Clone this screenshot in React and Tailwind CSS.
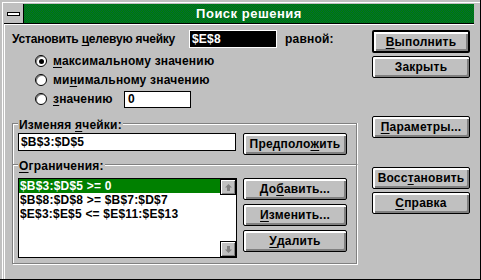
import React from "react";

const font = { fontFamily: '"Liberation Sans", Arial, sans-serif' };

const Btn = ({ children, w = "w-[98px]", def = false, className = "" }) => (
  <div
    className={`${w} ${def ? "h-[23px] border-2" : "h-[22px] border"} border-black rounded-[2px] bg-[#c0c0c0] shadow-[inset_2px_2px_0_#fff,inset_-2px_-2px_0_#808080] flex items-center justify-center text-[12px] font-bold text-black ${className}`}
  >
    {children}
  </div>
);

const U = ({ children }) => <span className="underline underline-offset-2">{children}</span>;

const Radio = ({ checked }) => (
  <div className="w-[12px] h-[12px] rounded-full bg-white border border-black shadow-[inset_1px_1px_0_#808080] flex items-center justify-center">
    {checked && <div className="w-[5px] h-[5px] rounded-full bg-black" />}
  </div>
);

const Arrow = ({ up }) => (
  <div className="w-[16px] h-[16px] bg-[#c0c0c0] border border-black shadow-[inset_1px_1px_0_#fff,inset_-1px_-1px_0_#808080] flex items-center justify-center">
    <svg width="9" height="9" viewBox="0 0 9 9">
      {up ? (
        <path d="M4.5 1 L8 4.5 H6 V8 H3 V4.5 H1 Z" fill="#808080" />
      ) : (
        <path d="M4.5 8 L8 4.5 H6 V1 H3 V4.5 H1 Z" fill="#808080" />
      )}
    </svg>
  </div>
);

export default function App() {
  return (
    <div
      style={font}
      className="w-[481px] h-[280px] bg-[#c0c0c0] border-r border-b border-black shadow-[inset_2px_2px_0_#c0c0c0,inset_3px_3px_0_#fff] pt-[4px] pl-[4px] pr-[6px] flex flex-col text-black tracking-[0.2px]"
    >
      {/* title bar */}
      <div className="h-[20px] flex border-b border-black">
        <div className="w-[20px] h-full bg-[#c0c0c0] border-r border-black flex items-center justify-center">
          <div className="w-[13px] h-[4px] bg-white border border-black" />
        </div>
        <div className="flex-1 bg-[repeating-conic-gradient(#008000_0_25%,#006838_0_50%)] bg-[length:2px_2px] flex items-center justify-center text-white font-bold text-[13px] tracking-[0.5px]">
          Поиск решения
        </div>
      </div>

      <div className="flex flex-1 pl-[8px] shadow-[inset_1px_1px_0_#fff]">
        {/* left column */}
        <div className="w-[345px] flex flex-col">
          <div className="flex items-center mt-[6px] h-[18px]">
            <span className="text-[12px] font-bold w-[177px] whitespace-nowrap tracking-[-0.2px]">
              Установить <U>ц</U>елевую ячейку
            </span>
            <div className="w-[88px] h-[18px] bg-black border border-white flex items-center px-[2px] text-white text-[12px] font-bold">
              $E$8
            </div>
            <span className="ml-[8px] text-[12px] font-bold">равной:</span>
          </div>

          <div className="flex flex-col pl-[23px] mt-[7px] gap-[7px] text-[12px] font-bold">
            <div className="flex items-center gap-[6px] h-[12px]">
              <Radio checked />
              <span><U>м</U>аксимальному значению</span>
            </div>
            <div className="flex items-center gap-[6px] h-[12px]">
              <Radio />
              <span>ми<U>н</U>имальному значению</span>
            </div>
            <div className="flex items-center gap-[6px] h-[12px]">
              <Radio />
              <span className="w-[65px]"><U>з</U>начению</span>
              <div className="w-[67px] h-[17px] bg-white border border-black flex items-center px-[3px]">0</div>
            </div>
          </div>

          {/* group 1 */}
          <div className="mt-[18px] h-[41px] border-t border-l border-r border-[#808080] shadow-[inset_1px_1px_0_#fff,1px_0_0_#fff] flex flex-col pl-[5px]">
            <span className="-mt-[6px] w-fit bg-[#c0c0c0] px-[1px] text-[12px] font-bold leading-[14px]">
              Изменяя <U>я</U>чейки:
            </span>
            <div className="flex mt-[1px] gap-[7px]">
              <div className="w-[218px] h-[18px] bg-white border border-black flex items-center px-[2px] text-[12px] font-bold">
                $B$3:$D$5
              </div>
              <Btn w="w-[104px]">Предполо<U>ж</U>ить</Btn>
            </div>
          </div>

          {/* group 2 */}
          <div className="h-[100px] border border-[#808080] shadow-[inset_1px_1px_0_#fff,1px_1px_0_#fff] flex flex-col pl-[5px]">
            <span className="-mt-[6px] w-fit bg-[#c0c0c0] px-[1px] text-[12px] font-bold leading-[14px]">
              <U>О</U>граничения:
            </span>
            <div className="flex mt-[5px] gap-[6px]">
              <div className="w-[219px] h-[80px] bg-white border border-black flex">
                <div className="flex-1 flex flex-col text-[12px] font-bold leading-[14px]">
                  <div className="bg-[#008000] text-white px-[1px]">$B$3:$D$5 &gt;= 0</div>
                  <div className="px-[1px]">$B$8:$D$8 &gt;= $B$7:$D$7</div>
                  <div className="px-[1px]">$E$3:$E$5 &lt;= $E$11:$E$13</div>
                </div>
                <div className="w-[16px] flex flex-col justify-between bg-white">
                  <Arrow up />
                  <Arrow />
                </div>
              </div>
              <div className="flex flex-col gap-[4px]">
                <Btn w="w-[104px]">До<U>б</U>авить...</Btn>
                <Btn w="w-[104px]"><U>И</U>зменить...</Btn>
                <Btn w="w-[104px]"><U>У</U>далить</Btn>
              </div>
            </div>
          </div>
        </div>

        {/* right column */}
        <div className="ml-[15px] flex flex-col pt-[6px]">
          <Btn def><U>В</U>ыполнить</Btn>
          <Btn className="mt-[3px]">Закрыть</Btn>
          <Btn className="mt-[38px]"><U>П</U>араметры...</Btn>
          <Btn className="mt-[29px]">Восс<U>т</U>ановить</Btn>
          <Btn className="mt-[3px]"><U>С</U>правка</Btn>
        </div>
      </div>
    </div>
  );
}
